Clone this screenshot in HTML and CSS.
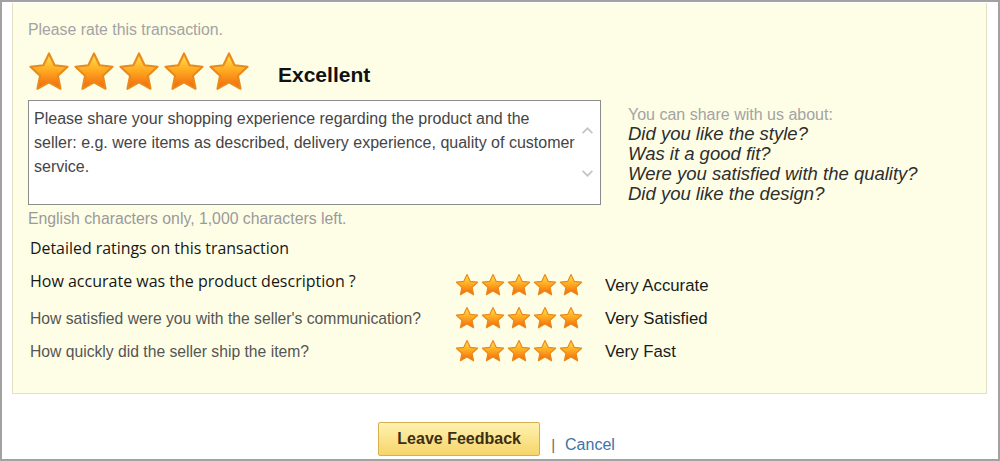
FILE: index.html
```html
<!DOCTYPE html>
<html lang="en">
<head>
<meta charset="utf-8">
<title>Leave Feedback</title>
<link rel="stylesheet" href="styles.css">
</head>
<body>
<svg class="defs" width="0" height="0" aria-hidden="true">
  <defs>
    <linearGradient id="starFill" x1="0" y1="0" x2="0" y2="1">
      <stop offset="0" stop-color="#ffe45a"/>
      <stop offset="0.45" stop-color="#ffae22"/>
      <stop offset="1" stop-color="#f2640c"/>
    </linearGradient>
    <symbol id="star" viewBox="0 0 24 24">
      <path d="M12 1.4 L15.2 8.1 L22.6 9 L17.1 14.1 L18.6 21.6 L12 17.9 L5.4 21.6 L6.9 14.1 L1.4 9 L8.8 8.1 Z" fill="url(#starFill)" stroke="#e98a1a" stroke-width="1.2" stroke-linejoin="round"/>
    </symbol>
  </defs>
</svg>
<div class="frame">
  <div class="panel">
    <div class="prompt">Please rate this transaction.</div>
    <div class="overall">
      <div class="stars stars-big">
        <svg><use href="#star"/></svg><svg><use href="#star"/></svg><svg><use href="#star"/></svg><svg><use href="#star"/></svg><svg><use href="#star"/></svg>
      </div>
      <span class="overall-label">Excellent</span>
    </div>
    <div class="share">
      <div class="share-left">
        <div class="textbox">
          <div class="textbox-text">Please share your shopping experience regarding the product and the<br>seller: e.g. were items as described, delivery experience, quality of customer<br>service.</div>
          <div class="scroll">
            <svg viewBox="0 0 12 8"><path d="M1.5 6.5 L6 2 L10.5 6.5" fill="none" stroke="#c4c4c4" stroke-width="1.6"/></svg>
            <svg viewBox="0 0 12 8"><path d="M1.5 1.5 L6 6 L10.5 1.5" fill="none" stroke="#c4c4c4" stroke-width="1.6"/></svg>
          </div>
        </div>
        <div class="hint">English characters only, 1,000 characters left.</div>
      </div>
      <div class="tips">
        <div class="tips-title">You can share with us about:</div>
        <div class="tip">Did you like the style?</div>
        <div class="tip">Was it a good fit?</div>
        <div class="tip">Were you satisfied with the quality?</div>
        <div class="tip">Did you like the design?</div>
      </div>
    </div>
    <div class="detail-title">Detailed ratings on this transaction</div>
    <div class="detail-grid">
      <div class="q q-dark q-first">How accurate was the product description ?</div>
      <div class="stars stars-small"><svg><use href="#star"/></svg><svg><use href="#star"/></svg><svg><use href="#star"/></svg><svg><use href="#star"/></svg><svg><use href="#star"/></svg></div>
      <div class="ans">Very Accurate</div>

      <div class="q q-gray">How satisfied were you with the seller's communication?</div>
      <div class="stars stars-small"><svg><use href="#star"/></svg><svg><use href="#star"/></svg><svg><use href="#star"/></svg><svg><use href="#star"/></svg><svg><use href="#star"/></svg></div>
      <div class="ans">Very Satisfied</div>

      <div class="q q-gray">How quickly did the seller ship the item?</div>
      <div class="stars stars-small"><svg><use href="#star"/></svg><svg><use href="#star"/></svg><svg><use href="#star"/></svg><svg><use href="#star"/></svg><svg><use href="#star"/></svg></div>
      <div class="ans">Very Fast</div>
    </div>
  </div>
  <div class="footer">
    <button class="btn" type="button">Leave Feedback</button>
    <span class="sep">|</span>
    <a class="cancel" href="#">Cancel</a>
  </div>
</div>
</body>
</html>
```

FILE: styles.css
```css
* { box-sizing: border-box; }

html, body {
  margin: 0;
  padding: 0;
  background: #ffffff;
}

body {
  font-family: "Liberation Sans", Arial, sans-serif;
}

.defs {
  position: absolute;
  width: 0;
  height: 0;
  overflow: hidden;
}

.frame {
  width: 1000px;
  height: 461px;
  border: 2px solid #a2a2a2;
  padding: 1px 11px 0 10px;
  display: flex;
  flex-direction: column;
  background: #ffffff;
}

.panel {
  height: 391px;
  background: #fefee6;
  border: 1px solid #e3e0c6;
  border-top: none;
  padding: 18px 15px 0 15px;
}

.prompt {
  font-size: 15.8px;
  line-height: 18px;
  color: #a3a3a3;
}

.overall {
  display: flex;
  align-items: center;
  margin-top: 12px;
  height: 42px;
}

.stars {
  display: flex;
}

.stars-big {
  gap: 3px;
}

.stars-big svg {
  width: 42px;
  height: 42px;
}

.overall-label {
  margin-left: 28px;
  font-size: 21px;
  font-weight: bold;
  color: #111111;
  padding-top: 5px;
}

.share {
  display: flex;
  margin-top: 7px;
}

.share-left {
  width: 573px;
}

.textbox {
  height: 105px;
  border: 1px solid #8c8c8c;
  background: #ffffff;
  display: flex;
}

.textbox-text {
  flex: 1;
  padding: 6px 0 0 5px;
  font-size: 16px;
  line-height: 24px;
  color: #454545;
  white-space: nowrap;
  overflow: hidden;
}

.scroll {
  width: 22px;
  flex: none;
  display: flex;
  flex-direction: column;
  justify-content: space-between;
  align-items: center;
  padding: 25px 4px 26px 0;
}

.scroll svg {
  width: 13px;
  height: 9px;
}

.hint {
  margin-top: 5px;
  font-size: 15.8px;
  line-height: 18px;
  color: #9a9a9a;
}

.tips {
  margin-left: 27px;
  padding-top: 6px;
}

.tips-title {
  font-size: 16px;
  line-height: 18px;
  color: #a3a3a3;
}

.tip {
  font-size: 18.5px;
  line-height: 20px;
  font-style: italic;
  color: #2e2e2e;
}

.detail-title {
  margin-top: 10px;
  padding-left: 2px;
  font-family: "Open Sans", "Liberation Sans", sans-serif;
  font-size: 15.9px;
  line-height: 20px;
  color: #161616;
}

.detail-grid {
  display: grid;
  grid-template-columns: 425px 128px auto;
  grid-auto-rows: 33px;
  align-items: center;
  margin-top: 11px;
  padding-left: 2px;
}

.q {
  font-size: 15.7px;
  line-height: 18px;
}

.q-dark {
  font-family: "Open Sans", "Liberation Sans", sans-serif;
  font-size: 16px;
  color: #161616;
}

.q-first {
  margin-bottom: 10px;
}

.q-gray {
  color: #555555;
}

.stars-small {
  gap: 2px;
}

.stars-small svg {
  width: 24.4px;
  height: 24.4px;
}

.ans {
  margin-left: 22px;
  font-size: 16.8px;
  color: #1a1a1a;
}

.footer {
  flex: 1;
  display: flex;
  justify-content: center;
  align-items: flex-end;
  padding-bottom: 3px;
  padding-right: 6px;
}

.btn {
  width: 162px;
  height: 34px;
  border: 1px solid #d6b04e;
  border-radius: 2px;
  background: linear-gradient(#fff2b0, #f6d56a);
  font-family: "Liberation Sans", Arial, sans-serif;
  font-size: 16px;
  font-weight: bold;
  color: #3b2f14;
}

.sep {
  margin-left: 11px;
  font-size: 15px;
  line-height: 18px;
  color: #666666;
  padding-bottom: 2px;
}

.cancel {
  margin-left: 10px;
  font-size: 16px;
  line-height: 18px;
  color: #3c73a8;
  text-decoration: none;
  padding-bottom: 2px;
}
```
